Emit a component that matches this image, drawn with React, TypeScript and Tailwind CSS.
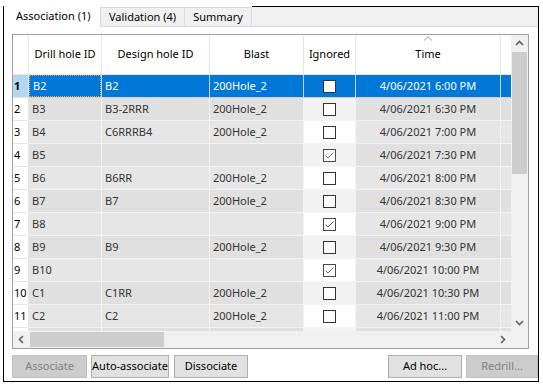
import React from 'react';

type Row = {
  n: number;
  drill: string;
  design: string;
  blast: string;
  ignored: boolean;
  time: string;
};

const rows: Row[] = [
  { n: 1, drill: 'B2', design: 'B2', blast: '200Hole_2', ignored: false, time: '4/06/2021 6:00 PM' },
  { n: 2, drill: 'B3', design: 'B3-2RRR', blast: '200Hole_2', ignored: false, time: '4/06/2021 6:30 PM' },
  { n: 3, drill: 'B4', design: 'C6RRRB4', blast: '200Hole_2', ignored: false, time: '4/06/2021 7:00 PM' },
  { n: 4, drill: 'B5', design: '', blast: '', ignored: true, time: '4/06/2021 7:30 PM' },
  { n: 5, drill: 'B6', design: 'B6RR', blast: '200Hole_2', ignored: false, time: '4/06/2021 8:00 PM' },
  { n: 6, drill: 'B7', design: 'B7', blast: '200Hole_2', ignored: false, time: '4/06/2021 8:30 PM' },
  { n: 7, drill: 'B8', design: '', blast: '', ignored: true, time: '4/06/2021 9:00 PM' },
  { n: 8, drill: 'B9', design: 'B9', blast: '200Hole_2', ignored: false, time: '4/06/2021 9:30 PM' },
  { n: 9, drill: 'B10', design: '', blast: '', ignored: true, time: '4/06/2021 10:00 PM' },
  { n: 10, drill: 'C1', design: 'C1RR', blast: '200Hole_2', ignored: false, time: '4/06/2021 10:30 PM' },
  { n: 11, drill: 'C2', design: 'C2', blast: '200Hole_2', ignored: false, time: '4/06/2021 11:00 PM' },
  // only the top edge of row 12 peeks out above the scrollbar
  { n: 12, drill: '', design: '', blast: '', ignored: false, time: '' },
];

const Chevron = ({ dir }: { dir: 'up' | 'down' | 'left' | 'right' }) => {
  const pts = {
    up: '1,5 4.5,1.5 8,5',
    down: '1,2 4.5,5.5 8,2',
    left: '5,1 1.5,4.5 5,8',
    right: '2,1 5.5,4.5 2,8',
  }[dir];
  const size = dir === 'up' || dir === 'down' ? { w: 9, h: 7 } : { w: 7, h: 9 };
  return (
    <svg width={size.w} height={size.h} viewBox={`0 0 ${size.w} ${size.h}`}>
      <polyline points={pts} fill="none" stroke="#606060" strokeWidth="1.6" />
    </svg>
  );
};

const CheckBox = ({ checked }: { checked: boolean }) => (
  <span
    className={`w-[13px] h-[13px] bg-white border flex items-center justify-center ${
      checked ? 'border-[#4a4a4a]' : 'border-[#333333]'
    }`}
  >
    {checked && (
      <svg width="11" height="11" viewBox="0 0 11 11">
        <polyline points="1.5,5.5 4,8 9.5,2.5" fill="none" stroke="#666666" strokeWidth="1" />
      </svg>
    )}
  </span>
);

const Btn = ({ label, w, disabled }: { label: string; w: string; disabled?: boolean }) => (
  <button
    className={`${w} h-[23px] border flex items-center justify-center whitespace-nowrap ${
      disabled ? 'bg-[#cccccc] border-[#bfbfbf] text-[#838383]' : 'bg-[#e1e1e1] border-[#adadad] text-black'
    }`}
  >
    {label}
  </button>
);

const HeaderCell = ({ w, children }: { w: string; children?: React.ReactNode }) => (
  <div className={`${w} shrink-0 h-full border-r border-[#e5e5e5] flex items-center justify-center relative`}>
    {children}
  </div>
);

export default function App() {
  return (
    <div
      className="w-[543px] h-[387px] bg-white pl-[3px] pt-[6px] text-[11px] text-black whitespace-nowrap"
      style={{ fontFamily: '"Noto Sans", "Liberation Sans", sans-serif' }}
    >
      <div className="w-[536px] h-[376px] border-x border-b border-black flex flex-col">
        {/* tabs */}
        <div className="h-[21px] flex shrink-0">
          <div className="w-[96px] bg-white flex items-center pl-[12px] pb-[1px]">Association (1)</div>
          <div className="w-[85px] mt-[1px] bg-[#f0f0f0] border border-[#d9d9d9] flex items-center justify-center">
            Validation (4)
          </div>
          <div className="w-[67px] mt-[1px] bg-[#f0f0f0] border border-l-0 border-[#d9d9d9] flex items-center justify-center">
            Summary
          </div>
          <div className="flex-1 bg-[#f0f0f0] border-t border-t-black border-b border-b-[#d9d9d9]" />
        </div>

        <div className="flex-1 pl-[8px] pt-[7px] pr-0">
          {/* grid */}
          <div className="w-[517px] h-[315px] border border-[#a0a0a0] flex flex-col">
            <div className="flex h-[296px]">
              <div className="w-[498px] h-full overflow-hidden">
                <div className="w-[560px]">
                  <div className="flex h-[40px] border-b border-[#e5e5e5] bg-white">
                    <HeaderCell w="w-[16px]" />
                    <HeaderCell w="w-[73px]">Drill hole ID</HeaderCell>
                    <HeaderCell w="w-[108px]">Design hole ID</HeaderCell>
                    <HeaderCell w="w-[94px]">Blast</HeaderCell>
                    <HeaderCell w="w-[52px]">Ignored</HeaderCell>
                    <HeaderCell w="w-[145px]">
                      <span className="absolute top-[1px] left-1/2 -translate-x-1/2">
                        <svg width="9" height="5" viewBox="0 0 9 5">
                          <polyline points="0.5,4.5 4.5,0.8 8.5,4.5" fill="none" stroke="#9a9a9a" strokeWidth="1" />
                        </svg>
                      </span>
                      Time
                    </HeaderCell>
                    <HeaderCell w="w-[40px]" />
                  </div>

                  {rows.map((r) => {
                    const sel = r.n === 1;
                    const even = r.n % 2 === 0;
                    const cellBg = sel ? 'bg-[#0078d7] text-white' : even ? 'bg-[#e0e0e0] text-[#333]' : 'bg-[#e6e6e6] text-[#333]';
                    const ignBg = sel ? 'bg-[#0078d7]' : even ? 'bg-[#f2f2f2]' : 'bg-white';
                    const line = sel ? 'border-[#d0d0d0]' : 'border-[#f3f3f3]';
                    return (
                      <div key={r.n} className="flex h-[23px]">
                        <div
                          className={`w-[16px] shrink-0 border-r border-b border-[#e5e5e5] flex items-center pl-[1px] ${
                            sel ? 'bg-[#b3d7f3] font-bold' : 'bg-white'
                          }`}
                        >
                          {r.n < 12 ? r.n : ''}
                        </div>
                        <div className={`w-[73px] shrink-0 border-r border-b ${line} ${cellBg}`}>
                          <div
                            className={`h-full flex items-center pl-[3px] ${
                              sel ? 'border border-dotted border-[#f0a040]' : ''
                            }`}
                          >
                            {r.drill}
                          </div>
                        </div>
                        <div className={`w-[108px] shrink-0 border-r border-b ${line} ${cellBg} flex items-center pl-[3px]`}>
                          {r.design}
                        </div>
                        <div className={`w-[94px] shrink-0 border-r border-b ${line} ${cellBg} flex items-center pl-[3px]`}>
                          {r.blast}
                        </div>
                        <div className={`w-[52px] shrink-0 border-r border-b ${line} ${ignBg} flex items-center justify-center`}>
                          <CheckBox checked={r.ignored} />
                        </div>
                        <div className={`w-[145px] shrink-0 border-r border-b ${line} ${cellBg} flex items-center justify-center`}>
                          {r.time}
                        </div>
                        <div className={`w-[40px] shrink-0 border-b ${line} ${cellBg}`} />
                      </div>
                    );
                  })}
                </div>
              </div>
              {/* vertical scrollbar */}
              <div className="w-[17px] h-full bg-[#f0f0f0] flex flex-col items-center">
                <div className="h-[17px] w-full flex items-center justify-center">
                  <Chevron dir="up" />
                </div>
                <div className="w-[15px] h-[122px] bg-[#cdcdcd]" />
                <div className="flex-1" />
                <div className="h-[17px] w-full flex items-center justify-center">
                  <Chevron dir="down" />
                </div>
              </div>
            </div>
            {/* horizontal scrollbar */}
            <div className="flex h-[17px]">
              <div className="w-[498px] h-full bg-[#f0f0f0] flex items-center">
                <div className="w-[17px] h-full flex items-center justify-center">
                  <Chevron dir="left" />
                </div>
                <div className="w-[134px] h-[15px] bg-[#cdcdcd]" />
                <div className="flex-1" />
                <div className="w-[17px] h-full flex items-center justify-center">
                  <Chevron dir="right" />
                </div>
              </div>
              <div className="w-[17px] h-full bg-[#f0f0f0]" />
            </div>
          </div>

          {/* buttons */}
          <div className="flex mt-[6px]">
            <Btn label="Associate" w="w-[75px]" disabled />
            <div className="ml-[4px]">
              <Btn label="Auto-associate" w="w-[78px]" />
            </div>
            <div className="ml-[5px]">
              <Btn label="Dissociate" w="w-[74px]" />
            </div>
            <div className="ml-auto">
              <Btn label="Ad hoc..." w="w-[74px]" />
            </div>
            <div className="ml-[4px]">
              <Btn label="Redrill..." w="w-[72px]" disabled />
            </div>
          </div>
        </div>
      </div>
    </div>
  );
}
